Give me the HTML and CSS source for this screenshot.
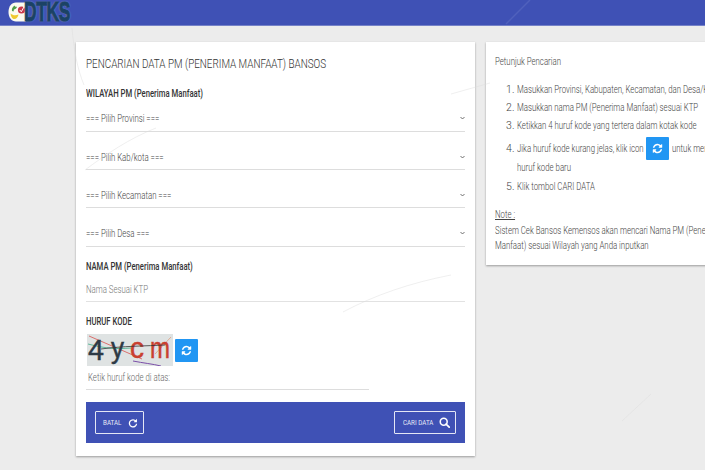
FILE: index.html
```html
<!DOCTYPE html>
<html lang="id">
<head>
<meta charset="utf-8">
<title>Cek Bansos DTKS</title>
<link rel="stylesheet" href="styles.css">
</head>
<body>
<header class="topbar">
  <div class="logo">
    <svg class="logo-mark" viewBox="0 0 18 20" width="18" height="20" aria-hidden="true">
      <path d="M8 .5h10v19H8C3.500 19.500.5 15.500.5 10S3.500.5 8 .5z" fill="#fbfbf0"/>
      <path d="M4 9c-.5-2 .5-4 2.500-5.500.3 1 1 1.500 2.500 1.300C8.500 6.500 7 7.500 6 7.500L5.500 9.500z" fill="#4f9d4a"/>
      <path d="M2.500 11.500c2.500 2 5 2.300 8 1 -.5 3-2.500 5-5 4.500-1.500-.5-2.800-3-3-5.500z" fill="#efc92f"/>
      <circle cx="13.500" cy="8" r="3.600" fill="#c9374a"/>
      <path d="M11.800 8l1.500 1.800 3-5.500" fill="none" stroke="#fff" stroke-width="1"/>
    </svg>
    <span class="logo-text">DTKS</span>
  </div>
</header>

<svg class="streaks" viewBox="0 0 705 470" width="705" height="470" aria-hidden="true">
  <path d="M72 28C74 50 77 68 84 85" />
  <path d="M85 170C105 155 130 138 156 128" />
  <path d="M343 312C375 295 410 283 451 275" />
  <path d="M451 94L490 83" />
  <path d="M622 421L651 394" />
  <path class="on-bar" d="M506 24L530 0" />
</svg>

<main class="page">
  <section class="card search-card">
    <h1 class="card-title"><span class="sq">PENCARIAN DATA PM (PENERIMA MANFAAT) BANSOS</span></h1>
    <h2 class="field-label"><span class="sq">WILAYAH PM (Penerima Manfaat)</span></h2>
    <div class="select-row"><span class="sq">=== Pilih Provinsi ===</span><svg class="chev" viewBox="0 0 6 4" width="5" height="4"><path d="M.6.8L3 3.200 5.400.8"/></svg></div>
    <div class="select-row"><span class="sq">=== Pilih Kab/kota ===</span><svg class="chev" viewBox="0 0 6 4" width="5" height="4"><path d="M.6.8L3 3.200 5.400.8"/></svg></div>
    <div class="select-row"><span class="sq">=== Pilih Kecamatan ===</span><svg class="chev" viewBox="0 0 6 4" width="5" height="4"><path d="M.6.8L3 3.200 5.400.8"/></svg></div>
    <div class="select-row"><span class="sq">=== Pilih Desa ===</span><svg class="chev" viewBox="0 0 6 4" width="5" height="4"><path d="M.6.8L3 3.200 5.400.8"/></svg></div>
    <h2 class="field-label name-label"><span class="sq">NAMA PM (Penerima Manfaat)</span></h2>
    <div class="text-row"><span class="sq">Nama Sesuai KTP</span></div>
    <h2 class="field-label code-label"><span class="sq">HURUF KODE</span></h2>
    <div class="captcha-row">
      <svg class="captcha" viewBox="0 0 86 32" width="86" height="32">
        <rect width="86" height="32" fill="#dfe3e3"/>
        <path d="M2 2L55 25" stroke="#d9534f" stroke-width=".8" fill="none"/>
        <path d="M1 10C20 15 30 15 44 14" stroke="#5fb89a" stroke-width="1" fill="none"/>
        <path d="M46 27C56 29 66 30 74 32" stroke="#7b4fa8" stroke-width="1" fill="none"/>
        <path d="M68 20L84 3" stroke="#e0a080" stroke-width=".8" fill="none"/>
        <text x="1" y="26" class="cap-a" textLength="16" lengthAdjust="spacingAndGlyphs">4</text>
        <text x="24" y="24" class="cap-a" textLength="13" lengthAdjust="spacingAndGlyphs">y</text>
        <text x="43" y="24" class="cap-c" textLength="14" lengthAdjust="spacingAndGlyphs">c</text>
        <text x="63" y="24" class="cap-c" textLength="20" lengthAdjust="spacingAndGlyphs">m</text>
        <path d="M14 15C35 12 60 12 78 11" stroke="#333" stroke-width=".8" fill="none"/>
      </svg>
      <span class="refresh-btn">
        <svg viewBox="0 0 1792 1792" width="11" height="11"><path d="M1639 1056q0 5-1 7-64 268-268 434.500t-478 166.500q-146 0-282.500-55t-243.500-157l-129 129q-19 19-45 19t-45-19-19-45v-448q0-26 19-45t45-19h448q26 0 45 19t19 45-19 45l-137 137q71 66 161 102t187 36q134 0 250-65t186-179q11-17 53-117 8-23 30-23h192q13 0 22.500 9.500t9.500 22.500zm25-800v448q0 26-19 45t-45 19h-448q-26 0-45-19t-19-45 19-45l138-138q-148-137-349-137-134 0-250 65t-186 179q-11 17-53 117-8 23-30 23h-199q-13 0-22.500-9.500t-9.500-22.500v-7q65-268 270-434.500t480-166.500q146 0 284 55.500t245 156.500l130-129q19-19 45-19t45 19 19 45z"/></svg>
      </span>
    </div>
    <div class="code-input"><span class="sq">Ketik huruf kode di atas:</span></div>
    <div class="action-bar">
      <span class="outline-btn batal"><span class="btn-label">BATAL</span>
        <svg viewBox="0 0 14 14" width="10" height="10" class="btn-icon"><path d="M11 4.500A5 5 0 1 0 12 8" fill="none" stroke="#fff" stroke-width="1.800"/><path d="M12.500 1V6H7.800z" fill="#fff"/></svg>
      </span>
      <span class="outline-btn cari"><span class="btn-label">CARI DATA</span>
        <svg viewBox="0 0 14 14" width="11" height="11" class="btn-icon"><circle cx="6" cy="6" r="4.400" fill="none" stroke="#fff" stroke-width="2"/><path d="M9 9l4 4" stroke="#fff" stroke-width="2.200" stroke-linecap="round"/></svg>
      </span>
    </div>
  </section>

  <aside class="card help-card">
    <p class="help-title"><span class="sq">Petunjuk Pencarian</span></p>
    <ol class="help-list">
      <li><span class="sq">Masukkan Provinsi, Kabupaten, Kecamatan, dan Desa/Kelurahan</span></li>
      <li><span class="sq">Masukkan nama PM (Penerima Manfaat) sesuai KTP</span></li>
      <li><span class="sq">Ketikkan 4 huruf kode yang tertera dalam kotak kode</span></li>
      <li class="icon-item">
        <div class="icon-line"><span class="sq jika">Jika huruf kode kurang jelas, klik icon</span><span class="refresh-btn"><svg viewBox="0 0 1792 1792" width="11" height="11"><path d="M1639 1056q0 5-1 7-64 268-268 434.500t-478 166.500q-146 0-282.500-55t-243.500-157l-129 129q-19 19-45 19t-45-19-19-45v-448q0-26 19-45t45-19h448q26 0 45 19t19 45-19 45l-137 137q71 66 161 102t187 36q134 0 250-65t186-179q11-17 53-117 8-23 30-23h192q13 0 22.500 9.500t9.500 22.500zm25-800v448q0 26-19 45t-45 19h-448q-26 0-45-19t-19-45 19-45l138-138q-148-137-349-137-134 0-250 65t-186 179q-11 17-53 117-8 23-30 23h-199q-13 0-22.500-9.500t-9.500-22.500v-7q65-268 270-434.500t480-166.500q146 0 284 55.500t245 156.500l130-129q19-19 45-19t45 19 19 45z"/></svg></span><span class="sq">untuk mendapatkan</span></div>
        <div class="icon-wrap"><span class="sq">huruf kode baru</span></div>
      </li>
      <li><span class="sq">Klik tombol CARI DATA</span></li>
    </ol>
    <p class="note-title"><span class="sq">Note :</span></p>
    <p class="note-body"><span class="sq">Sistem Cek Bansos Kemensos akan mencari Nama PM (Penerima</span><br><span class="sq">Manfaat) sesuai Wilayah yang Anda inputkan</span></p>
  </aside>
</main>
</body>
</html>
```

FILE: styles.css
```css
* { box-sizing: border-box; }

html, body {
  margin: 0;
  height: 470px;
  overflow: hidden;
}

body {
  position: relative;
  background: #ececec;
  font-family: Roboto, "Liberation Sans", sans-serif;
  font-size: 10.500px;
  color: #555;
}

/* The source text is horizontally condensed */
.sq {
  display: inline-block;
  white-space: nowrap;
  transform: scaleX(.745);
  transform-origin: left center;
}

.topbar {
  height: 26px;
  background: #3f51b5;
  border-bottom: 1px solid #7582c8;
  padding: 0 0 0 8px;
  display: flex;
  align-items: flex-start;
}

.logo {
  display: flex;
  align-items: center;
  height: 23px;
  padding-top: 1px;
}

.logo-mark { flex: none; }

.logo-text {
  margin-left: -2px;
  width: 46px;
  font-family: "Liberation Sans", sans-serif;
  font-weight: 700;
  font-size: 28px;
  line-height: 22px;
  letter-spacing: -.5px;
  color: #1b4265;
  -webkit-text-stroke: 1.200px #1b4265;
  text-shadow: 0 0 2px #bfe0e8;
  transform: scaleX(.62);
  transform-origin: left center;
}

.streaks {
  position: absolute;
  left: 0;
  top: 0;
  z-index: 2;
  pointer-events: none;
}

.streaks path {
  fill: none;
  stroke: #dcdcdc;
  stroke-width: 1;
  opacity: .45;
}

.streaks .on-bar { stroke: #6f7ecb; opacity: .35; stroke-width: 1.500; }

.page {
  display: flex;
  align-items: flex-start;
  gap: 11px;
  padding: 16px 0 0 76px;
  width: 830px;
}

.card {
  background: #fff;
  box-shadow: 0 1px 2px rgba(0, 0, 0, .35);
  flex: none;
}

.search-card {
  width: 399px;
  height: 414px;
  padding: 15px 10px 0;
}

.card-title {
  margin: 0;
  font-size: 13px;
  line-height: 14px;
  font-weight: 300;
  color: #333;
}

.card-title .sq { transform: scaleX(.76); }

.field-label {
  margin: 17px 0 0;
  font-size: 10.500px;
  line-height: 12px;
  font-weight: 500;
  color: #333;
}

.field-label .sq { transform: scaleX(.732); }

.select-row {
  height: 38px;
  padding-top: 20px;
  line-height: 12px;
  display: flex;
  justify-content: space-between;
  font-weight: 300;
  color: #444;
  border-bottom: 1px solid #ddd;
}

.select-row:first-of-type { height: 32px; padding-top: 13px; }
.select-row:nth-of-type(4) { height: 39px; }

.select-row .sq { width: 110px; }

.chev {
  margin-top: 3px;
  fill: none;
  stroke: #555;
  stroke-width: 1;
}

.name-label { margin-top: 14px; }

.text-row {
  height: 29px;
  padding-top: 11px;
  line-height: 12px;
  font-weight: 300;
  color: #777;
  border-bottom: 1px solid #e2e2e2;
}

.code-label { margin-top: 14px; }

.captcha-row {
  display: flex;
  align-items: center;
  gap: 2px;
  margin: 0 0 0 1px;
  padding-top: 6px;
}

.captcha { display: block; flex: none; }

.captcha text {
  font-family: "Liberation Sans", sans-serif;
  font-size: 30px;
  font-weight: 400;
  stroke-width: .5px;
}

.cap-a { fill: #2d3a45; stroke: #2d3a45; }
.cap-c { fill: #c9402f; stroke: #c9402f; }

.refresh-btn {
  flex: none;
  width: 23px;
  height: 23px;
  background: #2196f3;
  display: inline-flex;
  align-items: center;
  justify-content: center;
  border-radius: 1px;
}

.refresh-btn svg { fill: #fff; display: block; }

.code-input {
  width: 283px;
  height: 24px;
  padding: 6px 0 0 2px;
  line-height: 12px;
  font-weight: 300;
  color: #666;
  border-bottom: 1px solid #ddd;
}

.action-bar {
  margin-top: 12px;
  height: 41px;
  background: #3f51b5;
  display: flex;
  justify-content: space-between;
  align-items: center;
  padding: 0 9px;
}

.outline-btn {
  height: 23px;
  border: 1px solid #e4e7f5;
  border-radius: 1px;
  color: #e8eaf6;
  font-size: 7.500px;
  display: flex;
  align-items: center;
  padding-left: 7px;
}

.outline-btn.batal { width: 49px; }
.outline-btn.cari { width: 62px; padding-left: 8px; }

.btn-label {
  transform: scaleX(.83);
  transform-origin: left center;
  white-space: nowrap;
}

.batal .btn-label { width: 22px; }
.cari .btn-label { width: 35px; }

.btn-icon { display: block; flex: none; margin-left: 1px; }
.batal .btn-icon { margin-left: 3px; }

.help-card {
  width: 300px;
  height: 223px;
  padding: 12px 0 0 9px;
  font-weight: 300;
  line-height: 15px;
  color: #444;
  overflow: hidden;
}

.help-title { margin: 0; }

.help-list {
  margin: 13px 0 0;
  padding: 0 0 0 22px;
}

.help-list li { margin: 0 0 3px; line-height: 15px; }

.icon-line {
  display: flex;
  align-items: center;
  height: 23px;
  margin-top: 4px;
  white-space: nowrap;
}

.jika { width: 129px; flex: none; }

.icon-line .refresh-btn { margin-right: 3px; }

.icon-wrap { margin-top: 0; height: 16px; }

.note-title {
  margin: 13px 0 0;
  line-height: 15px;
}

.note-title .sq { text-decoration: underline; }

.note-body {
  margin: 1px 0 0;
  line-height: 15px;
  white-space: nowrap;
}
```
